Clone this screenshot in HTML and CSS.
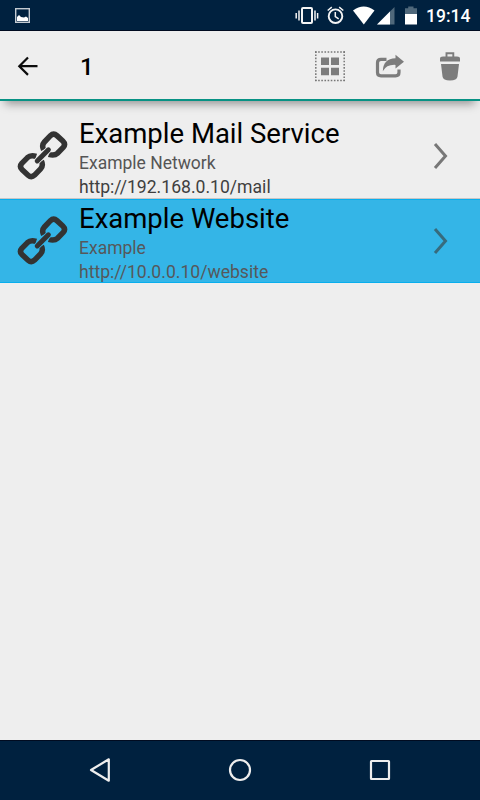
FILE: index.html
```html
<!DOCTYPE html>
<html lang="en">
<head>
<meta charset="utf-8">
<title>Bookmarks</title>
<link rel="stylesheet" href="styles.css">
</head>
<body>
<svg class="defs" width="0" height="0">
  <symbol id="link" viewBox="17 130.4 52 52">
    <g fill="none" stroke="#333" stroke-width="5.5">
      <path d="M43.6 150.2Q41.4 145.6 44.4 142.4L50.4 136.1Q53.6 133 56.9 136L62.8 141.5Q66 144.6 63.2 147.8L57.5 153.6Q54.4 156.6 48.8 154.8"/>
      <path d="M41.4 161.4Q43.6 166 40.6 169.2L34.6 175.5Q31.4 178.6 28.1 175.6L22.2 170.1Q19 167 21.8 163.8L27.5 158Q30.6 155 36.2 156.8"/>
      <path d="M37.2 161.4L48.4 150.2" class="gap" stroke-width="6.6" stroke-linecap="round"/>
      <path d="M37.2 161.4L48.4 150.2" stroke-width="4.9" stroke-linecap="round"/>
    </g>
  </symbol>
  <symbol id="chevron" viewBox="0 0 16 28"><path d="M2 2L12.5 14L2 26" fill="none" stroke="currentColor" stroke-width="3"/></symbol>
</svg>
<div class="screen">
  <header class="status">
    <svg width="480" height="31" viewBox="0 0 480 31">
      <rect x="15.7" y="8.7" width="13.6" height="13.6" fill="none" stroke="#c4cbd2" stroke-width="1.4"/>
      <path d="M17 21V17L19 15L21 17L24 17.5L26 16.5L28 18V21Z" fill="#fff"/>
      <g fill="none" stroke="#f4f4f4">
        <rect x="302" y="8" width="10" height="15" rx="1" stroke-width="2"/>
        <path d="M299 10.5V20.5M296.2 13V18.5M315 10.5V20.5M317.6 13V18.5" stroke-width="1.5"/>
        <circle cx="335.5" cy="16.2" r="6.8" stroke-width="1.9"/>
        <path d="M335.3 12V16.5L338.7 18.8M327.7 10.5L331.8 7.1M343.3 10.5L339.2 7.1" stroke-width="1.5"/>
      </g>
      <path d="M353 10.5Q363.7 2.5 374.5 10.5L363.8 24.6Z" fill="#fff"/>
      <path d="M394.5 7V24.5H377Z" fill="#4f687b"/>
      <path d="M390 11.5V24.5H377Z" fill="#fff"/>
      <path d="M405 14V8.2H408.2V6.4H413.5V8.2H417V14Z" fill="#4f687b"/>
      <path d="M405 14H417V24.5H405Z" fill="#fff"/>
    </svg>
    <span class="clock">19:14</span>
  </header>
  <div class="toolbar">
    <svg class="back" width="22" height="22" viewBox="17 55 22 22"><path d="M37.5 66.2H19.5M28 57.5L19.3 66.2L28 74.9" fill="none" stroke="#0c0c0c" stroke-width="2.2"/></svg>
    <span class="count">1</span>
    <svg class="actions" width="150" height="34" viewBox="313 49 150 34">
      <path d="M315 52H345M315 80.5H345" stroke="#777" stroke-width="1.5" stroke-dasharray="1.6 1.55" fill="none"/>
      <path d="M315.8 51.3V81M344.2 51.3V81" stroke="#777" stroke-width="1.5" stroke-dasharray="1.6 1.55" fill="none"/>
      <path d="M321 57.5h8v7.5h-8zM331 57.5h8v7.5h-8zM321 67.7h8v7.5h-8zM331 67.7h8v7.5h-8z" fill="#7c7c7c"/>
      <path d="M386.5 59.3H381Q377.5 59.3 377.5 62.8V72.5Q377.5 75.8 381 75.8H395.5Q399 75.8 399 72.5V69.5" fill="none" stroke="#7c7c7c" stroke-width="3.2"/>
      <path d="M395.5 54.7L404 61.7L395.5 68.5V64.9Q386.5 64.4 382.8 71.3Q383 58.7 395.5 58.2Z" fill="#7c7c7c"/>
      <path d="M446.5 57.5V53.2H453.3V57.5" fill="none" stroke="#7c7c7c" stroke-width="1.9"/>
      <path d="M440 61.5V58.8Q440 56.5 443 56.5H457Q460 56.5 460 58.8V61.5ZM441 64H459L457.5 76.5Q457 80.5 450 80.5Q443 80.5 442.5 76.5Z" fill="#7c7c7c"/>
    </svg>
  </div>
  <main class="list">
    <div class="row">
      <svg class="link" width="52" height="52"><use href="#link"/></svg>
      <div class="text"><div class="title">Example Mail Service</div><div class="sub">Example Network</div><div class="sub url">http://192.168.0.10/mail</div></div>
      <svg class="chevron" width="16" height="28"><use href="#chevron"/></svg>
    </div>
    <div class="row selected">
      <svg class="link" width="52" height="52"><use href="#link"/></svg>
      <div class="text"><div class="title">Example Website</div><div class="sub">Example</div><div class="sub url">http://10.0.0.10/website</div></div>
      <svg class="chevron" width="16" height="28"><use href="#chevron"/></svg>
    </div>
  </main>
  <nav class="navbar">
    <svg width="24" height="26" viewBox="88 757 24 26"><path d="M108.8 759.3V780.7L91 770Z"/></svg>
    <svg width="24" height="26" viewBox="228 757 24 26"><circle cx="240" cy="770" r="10"/></svg>
    <svg width="24" height="26" viewBox="368 757 24 26"><rect x="371" y="761" width="18" height="18" rx=".5"/></svg>
  </nav>
</div>
</body>
</html>
```
FILE: styles.css
```css
* { box-sizing: border-box; }
body { margin: 0; font-family: Roboto, sans-serif; }
svg { display: block; flex: none; }
.defs { position: absolute; }
.screen { width: 480px; height: 800px; display: flex; flex-direction: column; background: #eee; overflow: hidden; }
.status { position: relative; height: 31px; flex: none; background: #00213f; border-bottom: 1px solid #000b20; }
.clock { position: absolute; left: 426px; top: 6px; font-size: 17.5px; line-height: 21px; font-weight: 500; color: #fff; }
.toolbar { position: relative; height: 70px; flex: none; display: flex; align-items: center; padding: 2px 17px 0; background: #eee; border-bottom: 2px solid #079284; box-shadow: 0 8px 9px -5px rgba(0,0,0,.38); }
.count { margin-left: 41px; margin-top: 2px; font-size: 24px; line-height: 28px; font-weight: 500; color: #000; }
.actions { margin-left: auto; }
.list { flex: 1; padding-top: 13px; }
.row { --row-bg: #eee; height: 85px; display: flex; align-items: center; padding: 0 31px 0 17px; border-bottom: 1px solid #c6c6c6; color: #777; }
.selected { --row-bg: #34b5e7; height: 84px; background: #34b5e7; border-top: 1px solid #08aeed; border-bottom: 1px solid #08aeed; color: #376b7d; }
.gap { stroke: var(--row-bg); }
.text { flex: 1; align-self: flex-start; padding-left: 10px; white-space: nowrap; }
.title { margin: 4px 0 2px; font-size: 27.5px; line-height: 31px; color: #000; }
.sub { font-size: 17.5px; line-height: 24px; color: #555; }
.url { font-size: 17.6px; color: #3f3f3f; }
.selected .title { margin-top: 3px; }
.selected .sub { color: #56585b; }
.navbar { height: 60px; flex: none; display: flex; justify-content: space-between; align-items: center; padding: 0 88px 1px; background: #00213f; border-top: 1px solid #000b20; }
.navbar path, .navbar circle, .navbar rect { fill: none; stroke: #eee; stroke-width: 2.2; stroke-linejoin: round; }
```
